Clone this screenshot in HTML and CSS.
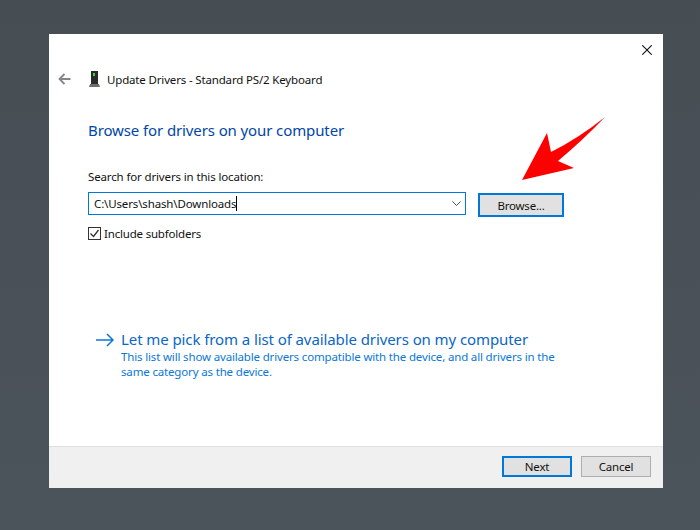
FILE: index.html
```html
<!DOCTYPE html>
<html lang="en">
<head>
<meta charset="utf-8">
<title>Update Drivers</title>
<link rel="stylesheet" href="styles.css">
</head>
<body>
<div class="window">
  <div class="close-row">
    <svg class="close-icon" width="10" height="10" viewBox="0 0 10 10"><path d="M.3.3l9.400 9.400M9.700.3L.3 9.700" stroke="#111" stroke-width="1.100" fill="none"/></svg>
  </div>
  <div class="title-row">
    <svg class="back-icon" width="13" height="12" viewBox="0 0 13 12"><path d="M12.500 6H1.500M6.500 1L1.500 6l5 5" stroke="#858585" stroke-width="1.800" fill="none"/></svg>
    <svg class="device-icon" width="11" height="16" viewBox="0 0 11 16"><path d="M2 0h7v13H2z" fill="#2b2b2b"/><path d="M1 13h9l1 3H0z" fill="#6e6e6e"/><path d="M4 2h2v3H4z" fill="#2fe02f"/></svg>
    <span class="title-text">Update Drivers - Standard PS/2 Keyboard</span>
  </div>
  <div class="content">
    <h1 class="heading">Browse for drivers on your computer</h1>
    <div class="label">Search for drivers in this location:</div>
    <div class="path-row">
      <div class="path-box">
        <span class="path-text">C:\Users\shash\Downloads</span><span class="caret"></span>
        <svg class="chevron" width="9" height="5" viewBox="0 0 9 5"><path d="M.4.4l4.100 4.100L8.600.4" stroke="#555" stroke-width="1" fill="none"/></svg>
      </div>
      <div class="btn btn-browse">Browse...</div>
    </div>
    <div class="check-row">
      <svg class="check-box" width="13" height="13" viewBox="0 0 13 13"><rect x=".5" y=".5" width="12" height="12" fill="#fff" stroke="#333"/><path d="M2.500 6.500l3 3 5-6.500" stroke="#333" stroke-width="1.300" fill="none"/></svg>
      <span class="check-label">Include subfolders</span>
    </div>
    <div class="pick-row">
      <svg class="pick-arrow" width="18" height="14" viewBox="0 0 18 14"><path d="M0 7h17M11 1l6 6-6 6" stroke="#0a78d7" stroke-width="1.500" fill="none"/></svg>
      <div class="pick-text">
        <div class="pick-title">Let me pick from a list of available drivers on my computer</div>
        <div class="pick-desc">This list will show available drivers compatible with the device, and all drivers in the same category as the device.</div>
      </div>
    </div>
  </div>
  <div class="footer">
    <div class="btn btn-next">Next</div>
    <div class="btn btn-cancel">Cancel</div>
  </div>
</div>
<svg class="red-arrow" width="100" height="72" viewBox="0 0 100 72"><path d="M84 1Q58 22 30 36L26 17 1 64 53 52 37 45Q62 24 84 1z" fill="#fe0000"/></svg>
</body>
</html>
```

FILE: styles.css
```css
* { box-sizing: border-box; }
html, body { margin: 0; height: 100%; }
body {
  background: linear-gradient(180deg, #464e54 0%, #4b545a 100%);
  padding: 34px 37px 42px 49px;
  font-family: "Noto Sans", "Open Sans", sans-serif;
  font-size: 11.5px;
  color: #111;
  position: relative;
  overflow: hidden;
}
.window { background: #fff; height: 454px; display: flex; flex-direction: column; }
.close-row { height: 30px; display: flex; justify-content: flex-end; align-items: center; padding: 1px 11px 0 0; }
.title-row { height: 30px; display: flex; align-items: center; padding-left: 9px; }
.back-icon { margin-right: 18px; }
.device-icon { margin-right: 7px; }
.title-text { letter-spacing: -.16px; }
.content { flex: 1; padding: 0 39px; }
.heading { margin: 26px 0 0; font-weight: 400; font-size: 15px; line-height: 20px; color: #0046a8; letter-spacing: -.11px; }
.label { margin-top: 29px; line-height: 16px; letter-spacing: -.14px; }
.path-row { display: flex; margin-top: 7px; align-items: flex-start; }
.path-box { width: 378px; height: 23px; border: 1px solid #0078d7; display: flex; align-items: center; padding: 0 4px 0 5px; letter-spacing: -.14px; }
.caret { width: 1px; height: 15px; background: #000; }
.chevron { margin-left: auto; }
.btn { display: flex; align-items: center; justify-content: center; background: #e1e1e1; letter-spacing: -.2px; }
.btn-browse { width: 86px; height: 24px; margin: 1px 0 0 12px; border: 2px solid #0078d7; }
.check-row { display: flex; align-items: center; margin-top: 7px; height: 18px; }
.check-box { margin-right: 3px; }
.check-label { letter-spacing: -.19px; }
.pick-row { display: flex; margin-top: 87px; }
.pick-arrow { margin: 4px 7px 0 8px; flex: none; }
.pick-title { font-size: 15px; line-height: 20px; letter-spacing: -.09px; color: #0a66c8; }
.pick-desc { width: 445px; line-height: 15px; letter-spacing: -.16px; color: #0a78d7; }
.footer { height: 42px; background: #f0f0f0; border-top: 1px solid #dfdfdf; display: flex; justify-content: flex-end; align-items: flex-start; padding: 9px 12px 0 0; gap: 9px; }
.btn-next { width: 70px; height: 21px; border: 2px solid #0078d7; }
.btn-cancel { width: 70px; height: 21px; border: 1px solid #adadad; }
.red-arrow { position: absolute; left: 521px; top: 116px; }
```
